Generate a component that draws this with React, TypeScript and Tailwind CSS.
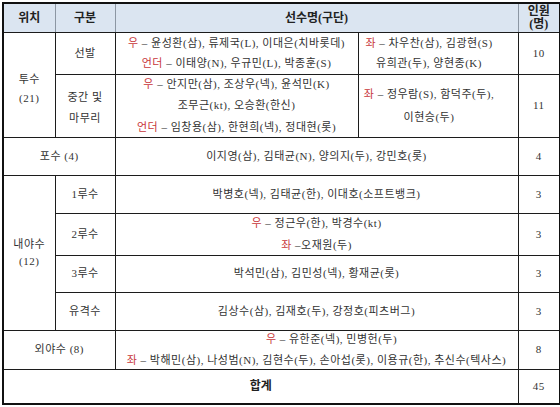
const red = "text-[#c8363a]";

function Td({
  children,
  className = "",
  inner = "",
  colSpan,
  rowSpan,
}: {
  children?: React.ReactNode;
  className?: string;
  inner?: string;
  colSpan?: number;
  rowSpan?: number;
}) {
  return (
    <td
      colSpan={colSpan}
      rowSpan={rowSpan}
      className={`border border-[#1c1c1c] p-0 text-center align-middle ${className}`}
    >
      <div className={`flex flex-col items-center justify-center whitespace-nowrap ${inner}`}>{children}</div>
    </td>
  );
}

function Th({
  children,
  className = "",
  colSpan,
}: {
  children?: React.ReactNode;
  className?: string;
  colSpan?: number;
}) {
  return (
    <th
      colSpan={colSpan}
      className={`border-x border-b border-x-[#8c96a3] border-b-[#1c1c1c] bg-[#dbe5f1] p-0 text-center align-middle text-[12px] font-bold tracking-normal text-[#222] ${className}`}
    >
      {children}
    </th>
  );
}

export default function App() {
  return (
    <div className="h-[407px] w-[560px] overflow-hidden bg-white pl-[2px] pt-[2px] text-[11px] tracking-[0.5px] text-[#333] [font-family:'Liberation_Serif','Noto_Sans_CJK_KR',serif]">
      <table className="w-[557px] table-fixed border-collapse border-2 border-[#111]">
        <colgroup>
          <col className="w-[52px]" />
          <col className="w-[60px]" />
          <col className="w-[243px]" />
          <col className="w-[160px]" />
          <col className="w-[42px]" />
        </colgroup>
        <thead>
          <tr className="h-[29px]">
            <Th>위치</Th>
            <Th>구분</Th>
            <Th colSpan={2}>선수명(구단)</Th>
            <Th className="leading-[13px]">
              인원
              <br />
              (명)
            </Th>
          </tr>
        </thead>
        <tbody>
          <tr className="h-[42px]">
            <Td rowSpan={2} inner="gap-[2px] pt-[8px]">
              <div>투수</div>
              <div>(21)</div>
            </Td>
            <Td inner="h-[41px]">선발</Td>
            <Td inner="h-[41px] gap-[4px]">
              <div>
                <span className={red}>우</span> – 윤성환(삼), 류제국(L), 이대은(치바롯데)
              </div>
              <div>
                <span className={red}>언더</span> – 이태양(N), 우규민(L), 박종훈(S)
              </div>
            </Td>
            <Td inner="h-[41px] gap-[4px] pr-[18px]">
              <div>
                <span className={red}>좌</span> – 차우찬(삼), 김광현(S)
              </div>
              <div>유희관(두), 양현종(K)</div>
            </Td>
            <Td inner="h-[41px]">10</Td>
          </tr>
          <tr className="h-[63px]">
            <Td inner="h-[61px] gap-[4px] pt-[4px]">
              <div>중간 및</div>
              <div>마무리</div>
            </Td>
            <Td inner="h-[61px] gap-[5px]">
              <div>
                <span className={red}>우</span> – 안지만(삼), 조상우(넥), 윤석민(K)
              </div>
              <div>조무근(kt), 오승환(한신)</div>
              <div>
                <span className={red}>언더</span> – 임창용(삼), 한현희(넥), 정대현(롯)
              </div>
            </Td>
            <Td inner="h-[61px] gap-[6px] pr-[18px]">
              <div>
                <span className={red}>좌</span> – 정우람(S), 함덕주(두),
              </div>
              <div>이현승(두)</div>
            </Td>
            <Td inner="h-[61px]">11</Td>
          </tr>
          <tr className="h-[38px]">
            <Td colSpan={2} inner="h-[37px]">
              포수 (4)
            </Td>
            <Td colSpan={2} inner="h-[37px]">
              이지영(삼), 김태균(N), 양의지(두), 강민호(롯)
            </Td>
            <Td inner="h-[37px]">4</Td>
          </tr>
          <tr className="h-[38px]">
            <Td rowSpan={4} inner="gap-[1px]">
              <div>내야수</div>
              <div>(12)</div>
            </Td>
            <Td inner="h-[37px]">1루수</Td>
            <Td colSpan={2} inner="h-[37px]">
              박병호(넥), 김태균(한), 이대호(소프트뱅크)
            </Td>
            <Td inner="h-[37px]">3</Td>
          </tr>
          <tr className="h-[42px]">
            <Td inner="h-[41px]">2루수</Td>
            <Td colSpan={2} inner="h-[41px] gap-[5px]">
              <div>
                <span className={red}>우</span> – 정근우(한), 박경수(kt)
              </div>
              <div>
                <span className={red}>좌</span> –오재원(두)
              </div>
            </Td>
            <Td inner="h-[41px]">3</Td>
          </tr>
          <tr className="h-[37px]">
            <Td inner="h-[36px]">3루수</Td>
            <Td colSpan={2} inner="h-[36px]">
              박석민(삼), 김민성(넥), 황재균(롯)
            </Td>
            <Td inner="h-[36px]">3</Td>
          </tr>
          <tr className="h-[38px]">
            <Td inner="h-[37px]">유격수</Td>
            <Td colSpan={2} inner="h-[37px]">
              김상수(삼), 김재호(두), 강정호(피츠버그)
            </Td>
            <Td inner="h-[37px]">3</Td>
          </tr>
          <tr className="h-[39px]">
            <Td colSpan={2} inner="h-[38px]">
              외야수 (8)
            </Td>
            <Td colSpan={2} inner="h-[38px] gap-[4px]">
              <div className="pl-[30px]">
                <span className={red}>우</span> – 유한준(넥), 민병헌(두)
              </div>
              <div>
                <span className={red}>좌</span> – 박해민(삼), 나성범(N), 김현수(두), 손아섭(롯), 이용규(한), 추신수(텍사스)
              </div>
            </Td>
            <Td inner="h-[38px]">8</Td>
          </tr>
          <tr className="h-[34px]">
            <Td colSpan={4} inner="h-[33px] text-[12px] font-bold tracking-normal text-[#222]">
              합계
            </Td>
            <Td inner="h-[33px]">45</Td>
          </tr>
        </tbody>
      </table>
    </div>
  );
}
